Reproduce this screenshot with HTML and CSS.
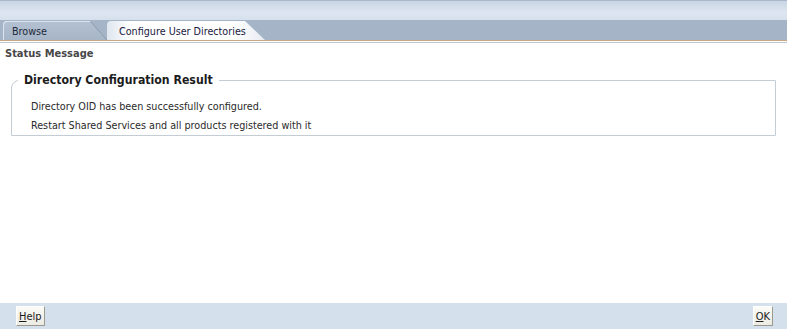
FILE: index.html
```html
<!DOCTYPE html>
<html lang="en">
<head>
  <meta charset="UTF-8">
  <title>Configure User Directories</title>
  <link rel="stylesheet" href="styles.css">
</head>
<body>
  <div class="page">
    <div class="top-band"></div>
    <div class="tab-bar">
      <div class="tab">Browse</div>
      <div class="tab active">Configure User Directories</div>
    </div>
    <div class="tab-rule"></div>
    <div class="content">
      <h2 class="section-title">Status Message</h2>
      <fieldset class="result">
        <legend>Directory Configuration Result</legend>
        <p>Directory OID has been successfully configured.</p>
        <p>Restart Shared Services and all products registered with it</p>
      </fieldset>
    </div>
    <div class="footer">
      <button class="btn"><u>H</u>elp</button>
      <button class="btn"><u>O</u>K</button>
    </div>
  </div>
</body>
</html>
```

FILE: styles.css
```css
* { box-sizing: border-box; }
html, body {
  margin: 0;
  height: 100%;
}
body {
  font-family: "DejaVu Sans Condensed", "DejaVu Sans", sans-serif;
  font-size: 10.7px;
  color: #222;
  background: #fff;
}
.page {
  display: flex;
  flex-direction: column;
  height: 100%;
}
.top-band {
  height: 20px;
  border-top: 1px solid #a9b8cb;
  background: linear-gradient(#c9d5e4, #dde6f1 60%, #d6e0ec);
}
.tab-bar {
  height: 20px;
  background: #a5b4c6;
  display: flex;
  align-items: flex-end;
  padding-left: 3px;
}
.tab {
  height: 19px;
  line-height: 22px;
  padding-left: 9px;
  width: 104px;
  color: #1e2a3a;
  border-top-left-radius: 4px;
  background: linear-gradient(#b4c1d2, #a6b5c7);
  clip-path: polygon(0 0, 87px 0, 104px 100%, 0 100%);
  box-shadow: inset 1px 1px 0 #dbe3ee;
  position: relative;
}
.tab::after {
  content: "";
  position: absolute;
  left: 87px;
  top: 0;
  width: 1px;
  height: 26px;
  background: #46505e;
  transform-origin: top;
  transform: rotate(-42deg);
}
.tab.active {
  width: 158px;
  padding-left: 12px;
  color: #1a1a40;
  background: linear-gradient(90deg, #dfe6ef, #fff 15%, #fff 80%, #e6ebf2);
  clip-path: polygon(0 0, 138px 0, 158px 100%, 0 100%);
  box-shadow: none;
}
.tab.active::after { display: none; }
.tab-rule {
  height: 3px;
  background: linear-gradient(#c9a784 0 1px, #fff 1px 2px, #c2c7ce 2px);
}
.content {
  flex: 1;
  padding: 0 11px;
}
.section-title {
  margin: 4px 0 0 -6px;
  font-size: 11px;
  font-weight: bold;
  color: #474747;
}
.result {
  margin: 13px 0 0;
  padding: 10px 0 0 19px;
  border: 1px solid #c4ccd5;
  border-top-left-radius: 8px;
  min-width: 0;
}
.result legend {
  padding: 0 6px;
  margin-left: -13px;
  font-size: 12.2px;
  font-weight: bold;
  color: #1c1c1c;
}
.result p {
  margin: 0;
  line-height: 19px;
  color: #2a2a2a;
}
.footer {
  height: 26px;
  background: #d5e0ed;
  display: flex;
  justify-content: space-between;
  align-items: center;
  padding: 0 14px 0 16px;
}
.btn {
  font: inherit;
  font-size: 11px;
  color: #1a1a1a;
  height: 20px;
  padding: 0 2px;
  background: linear-gradient(#fbfbf7, #ecebe3);
  border: 1px solid;
  border-color: #fff #9c9a90 #9c9a90 #fff;
  cursor: pointer;
}
```
